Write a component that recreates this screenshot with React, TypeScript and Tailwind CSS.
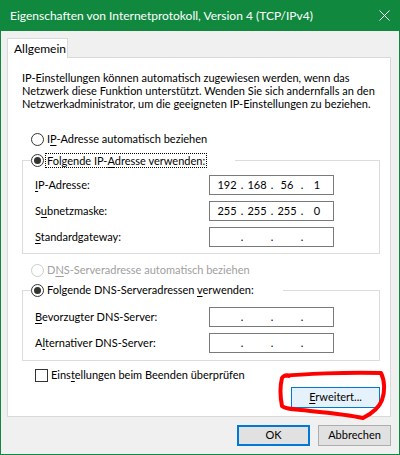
import React from "react";

function U({ children }: { children: React.ReactNode }) {
  return <span className="underline decoration-1 underline-offset-[2px]">{children}</span>;
}

function Radio({ checked, disabled }: { checked?: boolean; disabled?: boolean }) {
  return (
    <span
      className={
        disabled
          ? "flex h-[13px] w-[13px] shrink-0 items-center justify-center rounded-full border border-[#cccccc] bg-white"
          : "flex h-[13px] w-[13px] shrink-0 items-center justify-center rounded-full border border-[#333333] bg-white"
      }
    >
      {checked && <span className="h-[7px] w-[7px] rounded-full bg-[#333333]" />}
    </span>
  );
}

function IpBox({ parts }: { parts: string[] }) {
  return (
    <div className="flex h-[20px] w-[125px] shrink-0 items-center border border-[#7a7a7a] bg-white pl-[4px]">
      {parts.map((p, i) => (
        <React.Fragment key={i}>
          <span className="w-[26px] text-center">{p}</span>
          {i < 3 && <span className="w-[4px] text-center">.</span>}
        </React.Fragment>
      ))}
    </div>
  );
}

function Row({ label, parts, top }: { label: React.ReactNode; parts: string[]; top: string }) {
  return (
    <div className={top === "8" ? "mt-[8px] flex items-center pl-[4px]" : "mt-[6px] flex items-center pl-[4px]"}>
      <span className="w-[174px] shrink-0">{label}</span>
      <IpBox parts={parts} />
    </div>
  );
}

export default function App() {
  const empty = ["", "", "", ""];
  return (
    <div className="relative flex h-[455px] w-[400px] flex-col overflow-hidden whitespace-nowrap border-x border-b border-[#10893e] bg-[#f0f0f0] font-['Lato','Liberation_Sans',sans-serif] text-[11px] text-black">
      <div className="flex h-[31px] shrink-0 items-center justify-between bg-[#10893e] pl-[9px] pr-[9px] text-[12px] text-white">
        <span>Eigenschaften von Internetprotokoll, Version 4 (TCP/IPv4)</span>
        <svg width="11" height="11" viewBox="0 0 11 11">
          <path d="M0.5 0.5 L10.5 10.5 M10.5 0.5 L0.5 10.5" stroke="white" strokeWidth="1" fill="none" />
        </svg>
      </div>

      <div className="ml-[6px] mr-[8px] flex flex-col pt-[7px]">
        <div className="relative z-10 -mb-[1px] flex h-[20px] w-[61px] items-center border border-b-0 border-[#d9d9d9] bg-white pl-[6px] text-[12px]">
          Allgemein
        </div>
        <div className="flex h-[360px] flex-col border border-[#d9d9d9] bg-white pl-[14px] pr-[10px] pt-[13px]">
          <p className="leading-[13px]">
            IP-Einstellungen können automatisch zugewiesen werden, wenn das
            <br />
            Netzwerk diese Funktion unterstützt. Wenden Sie sich andernfalls an den
            <br />
            Netzwerkadministrator, um die geeigneten IP-Einstellungen zu beziehen.
          </p>

          <div className="ml-[9px] mt-[21px] flex h-[16px] items-center gap-[3px]">
            <Radio />
            <span>
              I<U>P</U>-Adresse automatisch beziehen
            </span>
          </div>

          <fieldset className="mt-[5px] border border-[#dcdcdc] pb-[6px] pl-[8px]">
            <legend className="h-[17px] w-[204px]">
              <div className="flex h-[17px] items-center">
                <Radio checked />
                <span className="ml-[1px] border border-dotted border-black px-[1px] leading-[13px]">
                  Folgende IP-<U>A</U>dresse verwenden:
                </span>
              </div>
            </legend>
            <Row top="6" label={<><U>I</U>P-Adresse:</>} parts={["192", "168", "56", "1"]} />
            <Row top="6" label={<>S<U>u</U>bnetzmaske:</>} parts={["255", "255", "255", "0"]} />
            <Row top="6" label={<><U>S</U>tandardgateway:</>} parts={empty} />
          </fieldset>

          <div className="ml-[9px] mt-[8px] flex h-[16px] items-center gap-[3px] text-[#a0a0a0]">
            <Radio disabled />
            <span>
              D<U>N</U>S-Serveradresse automatisch beziehen
            </span>
          </div>

          <fieldset className="mt-[4px] border border-[#dcdcdc] pb-[7px] pl-[8px]">
            <legend className="h-[17px] w-[252px]">
              <div className="flex h-[17px] items-center gap-[3px]">
                <Radio checked />
                <span>
                  Folgende DNS-Serveradressen <U>v</U>erwenden:
                </span>
              </div>
            </legend>
            <Row top="8" label={<><U>B</U>evorzugter DNS-Server:</>} parts={empty} />
            <Row top="6" label={<>A<U>l</U>ternativer DNS-Server:</>} parts={empty} />
          </fieldset>

          <div className="ml-[13px] mt-[7px] flex h-[14px] items-center gap-[3px]">
            <span className="h-[13px] w-[13px] shrink-0 border border-[#333333] bg-white" />
            <span>
              Eins<U>t</U>ellungen beim Beenden überprüfen
            </span>
          </div>

          <div className="mt-[5px] flex justify-end">
            <button className="flex h-[21px] w-[89px] items-center justify-center border border-[#0078d7] bg-[#e5f1fb]">
              <span>
                <U>E</U>rweitert...
              </span>
            </button>
          </div>
        </div>

        <div className="mt-[8px] flex justify-end gap-[8px]">
          <button className="flex h-[21px] w-[73px] items-center justify-center border-2 border-[#0078d7] bg-[#e1e1e1]">
            OK
          </button>
          <button className="flex h-[21px] w-[73px] items-center justify-center border border-[#adadad] bg-[#e1e1e1]">
            Abbrechen
          </button>
        </div>
      </div>

      <svg className="pointer-events-none absolute left-0 top-0" width="400" height="455" viewBox="0 0 400 455">
        <path
          d="M283 376 C300 374 345 372 380 373 C384 381 384 392 381 400 C378 408 370 414 362 418 C345 414 320 412 300 410 C291 409 284 409 281 406 C279 396 279 386 281 378 C282 376 285 374 288 376"
          stroke="#ff0000"
          strokeWidth="4"
          fill="none"
          strokeLinejoin="round"
          strokeLinecap="round"
        />
      </svg>
    </div>
  );
}
